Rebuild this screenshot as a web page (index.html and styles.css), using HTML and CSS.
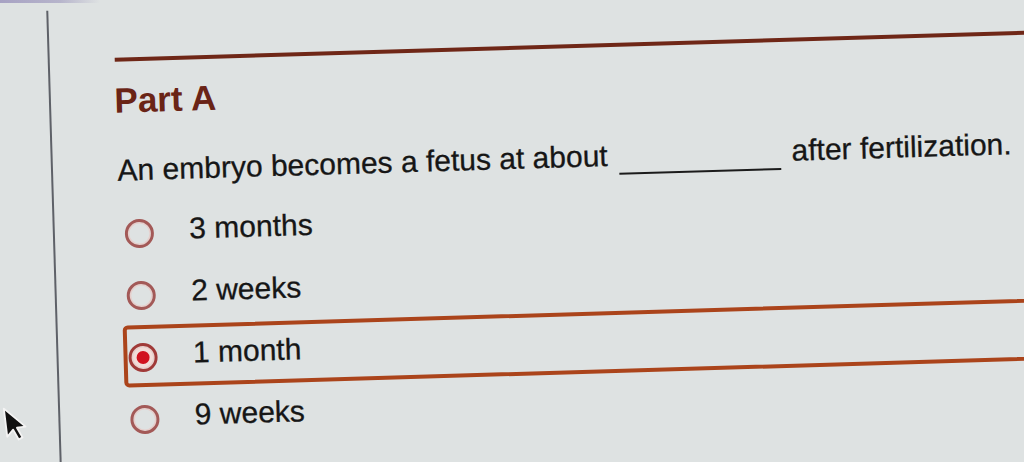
FILE: index.html
```html
<!DOCTYPE html>
<html lang="en">
<head>
<meta charset="utf-8">
<title>Part A</title>
<link rel="stylesheet" href="styles.css">
</head>
<body>
<div class="page">
  <div class="gutter"></div>
  <div class="main">
    <div class="rule"></div>
    <h2 class="part-title">Part A</h2>
    <p class="question">An embryo becomes a fetus at about<span class="blank"></span>after fertilization.</p>
    <div class="options">
      <div class="option"><span class="radio"></span><span class="label">3 months</span></div>
      <div class="option"><span class="radio"></span><span class="label">2 weeks</span></div>
      <div class="option selected"><span class="radio"></span><span class="label">1 month</span></div>
      <div class="option"><span class="radio"></span><span class="label">9 weeks</span></div>
    </div>
  </div>
</div>
<svg class="cursor" width="27" height="40" viewBox="0 0 16 24" aria-hidden="true">
  <polygon points="1,1 1,18 5,14.2 7.6,20.5 10,19.5 7.4,13.3 12.6,13.3" fill="#111" stroke="#f4f4f4" stroke-width="1.1" stroke-linejoin="round"/>
</svg>
</body>
</html>
```
FILE: styles.css
```css
html, body {
  margin: 0;
  padding: 0;
  overflow: hidden;
  width: 1024px;
  height: 462px;
}
body {
  position: relative;
  background: linear-gradient(to right, #a7a2c3 0, #b6b4cb 60px, rgba(222,226,226,0) 100px) no-repeat 0 0 / 100% 3px, #dee2e2;
  font-family: "Liberation Sans", Arial, Helvetica, sans-serif;
  color: #161616;
}
.page {
  width: 1024px;
  height: 500px;
  display: flex;
  transform: rotate(-1.7deg);
  transform-origin: 512px 231px;
}
.gutter {
  flex: none;
  width: 53px;
  margin-top: -3px;
  border-right: 2.5px solid #5e6168;
}
.main {
  flex: 1;
  padding: 46px 0 0 64.5px;
}
.rule {
  width: 1000px;
  height: 0;
  border-top: 4px solid #6f2717;
}
.part-title {
  margin: 19px 0 0 -1px;
  font-size: 35px;
  line-height: 40px;
  font-weight: bold;
  color: #6a2416;
}
.question {
  margin: 32px 0 0 0;
  font-size: 30px;
  line-height: 36px;
  white-space: nowrap;
  -webkit-text-stroke: 0.3px #161616;
}
.blank {
  display: inline-block;
  width: 162px;
  height: 0;
  margin: 0 11px;
  border-bottom: 2px solid #1c1c1c;
  vertical-align: -9px;
}
.options {
  margin-top: 12px;
}
.option {
  display: flex;
  align-items: center;
  box-sizing: border-box;
  width: 1100px;
  height: 62px;
  padding: 3px 0 0 1px;
  border: 4px solid transparent;
  border-radius: 5px;
}
.option.selected {
  border-color: #ab441b;
}
.radio {
  flex: none;
  box-sizing: border-box;
  width: 29px;
  height: 29px;
  border: 3px solid #a35957;
  border-radius: 50%;
  box-shadow: inset 0 0 0 1.5px #e6cfcc;
  display: flex;
  align-items: center;
  justify-content: center;
}
.selected .radio {
  border-color: #a03a38;
  background: #f2dcd8;
}
.selected .radio::after {
  content: "";
  width: 13px;
  height: 13px;
  border-radius: 50%;
  background: #d1121f;
}
.label {
  margin: 0 0 7px 36px;
  font-size: 30px;
  line-height: 36px;
  white-space: nowrap;
  -webkit-text-stroke: 0.3px #161616;
}
.cursor {
  position: absolute;
  left: 2px;
  top: 407px;
  transform: rotate(-7deg);
  transform-origin: 1.6px 1.6px;
}
```
